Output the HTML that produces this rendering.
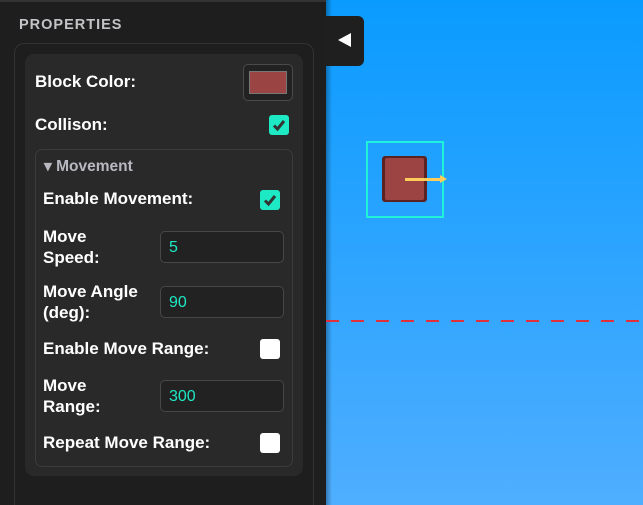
<!DOCTYPE html>
<html style="overflow:hidden;width:643px;height:505px"><head><style>
*{box-sizing:border-box;margin:0;padding:0}
body{width:643px;height:505px;overflow:hidden;position:relative;font-family:"Liberation Sans",Arial,sans-serif;background:#1e1e1e}
.canvas{position:absolute;left:326px;top:0;width:317px;height:505px;background:linear-gradient(#0a9bff,#4faeff)}
.canvas:before{content:"";position:absolute;left:0;top:0;width:6px;height:100%;background:linear-gradient(90deg,rgba(0,0,0,.3),rgba(0,0,0,0))}
.panel{position:absolute;left:0;top:0;width:326px;height:505px;background:#1e1e1e;border-top:2px solid #333;overflow:hidden}
.title{position:absolute;left:19px;top:15px;font-size:14.5px;font-weight:bold;color:#c4c4c8;letter-spacing:1px}
.outer{position:absolute;left:14px;top:41px;width:300px;height:480px;border:1px solid #333;border-radius:10px}
.card{position:absolute;left:25px;top:52px;width:278px;height:422px;background:#292929;border-radius:9px}
.lbl{position:absolute;color:#fff;font-weight:bold;font-size:17px;line-height:21px}
.cb{position:absolute;width:20px;height:20px;border-radius:3px;background:#1de9c4}
.cb svg{position:absolute;left:0;top:0}
.ub{position:absolute;width:20px;height:20px;border-radius:3px;background:#fff}
.fs{position:absolute;left:35px;top:147px;width:258px;height:318px;border:1px solid #3c3c3c;border-radius:7px}
.inp{position:absolute;left:160px;width:124px;height:32px;border:1px solid #474747;border-radius:5px;background:#222;color:#1de9c4;font-size:16px;padding:7px 0 0 8px}
.tab{position:absolute;left:326px;top:16px;width:38px;height:50px;background:#1f1f1f;border-radius:0 6px 6px 0}
</style></head><body>
<div class="canvas">
  <div style="position:absolute;left:0;top:320px;width:317px;height:2px;background:repeating-linear-gradient(90deg,#e0303c 0 13px,transparent 13px 25px)"></div>
  <div style="position:absolute;left:40px;top:141px;width:78px;height:77px;border:2px solid #1ff2d8"></div>
  <div style="position:absolute;left:56px;top:156px;width:45px;height:46px;background:#5b2222;border-radius:3px"></div>
  <div style="position:absolute;left:59px;top:158px;width:39px;height:42px;background:#9c4444;border-radius:2px"></div>
  <div style="position:absolute;left:79px;top:178px;width:38px;height:3px;background:#ffcc5c"></div>
  <div style="position:absolute;left:114px;top:175px;width:0;height:0;border-left:7px solid #ffcc5c;border-top:4px solid transparent;border-bottom:4px solid transparent"></div>
</div>
<div class="tab"><div style="position:absolute;left:12px;top:17px;width:0;height:0;border-right:13px solid #fff;border-top:7px solid transparent;border-bottom:7px solid transparent"></div></div>
<div class="panel">
  <div class="title">PROPERTIES</div>
  <div class="outer"></div>
  <div class="card"></div>
  <div class="lbl" style="left:35px;top:69px">Block Color:</div>
  <div style="position:absolute;left:243px;top:62px;width:50px;height:37px;border:1px solid #4a4a4a;border-radius:5px;background:#222"></div>
  <div style="position:absolute;left:249px;top:69px;width:38px;height:23px;background:#9b4444;border:1px solid #777"></div>
  <div class="lbl" style="left:35px;top:112px">Collison:</div>
  <div class="cb" style="left:269px;top:113px"><svg width="20" height="20"><path d="M5 10.5l3.5 3.5 6.5-8" stroke="#333" stroke-width="3" fill="none"/></svg></div>
  <div class="fs"></div>
  <div style="position:absolute;left:44px;top:155px;color:#b8b8c0;font-weight:bold;font-size:15.5px">▾ Movement</div>
  <div class="lbl" style="left:43px;top:186px">Enable Movement:</div>
  <div class="cb" style="left:260px;top:188px"><svg width="20" height="20"><path d="M5 10.5l3.5 3.5 6.5-8" stroke="#333" stroke-width="3" fill="none"/></svg></div>
  <div class="lbl" style="left:43px;top:224px">Move<br>Speed:</div>
  <div class="inp" style="top:229px">5</div>
  <div class="lbl" style="left:43px;top:279px">Move Angle<br>(deg):</div>
  <div class="inp" style="top:284px">90</div>
  <div class="lbl" style="left:43px;top:336px">Enable Move Range:</div>
  <div class="ub" style="left:260px;top:337px"></div>
  <div class="lbl" style="left:43px;top:373px">Move<br>Range:</div>
  <div class="inp" style="top:378px">300</div>
  <div class="lbl" style="left:43px;top:430px">Repeat Move Range:</div>
  <div class="ub" style="left:260px;top:431px"></div>
</div>
</body></html>
